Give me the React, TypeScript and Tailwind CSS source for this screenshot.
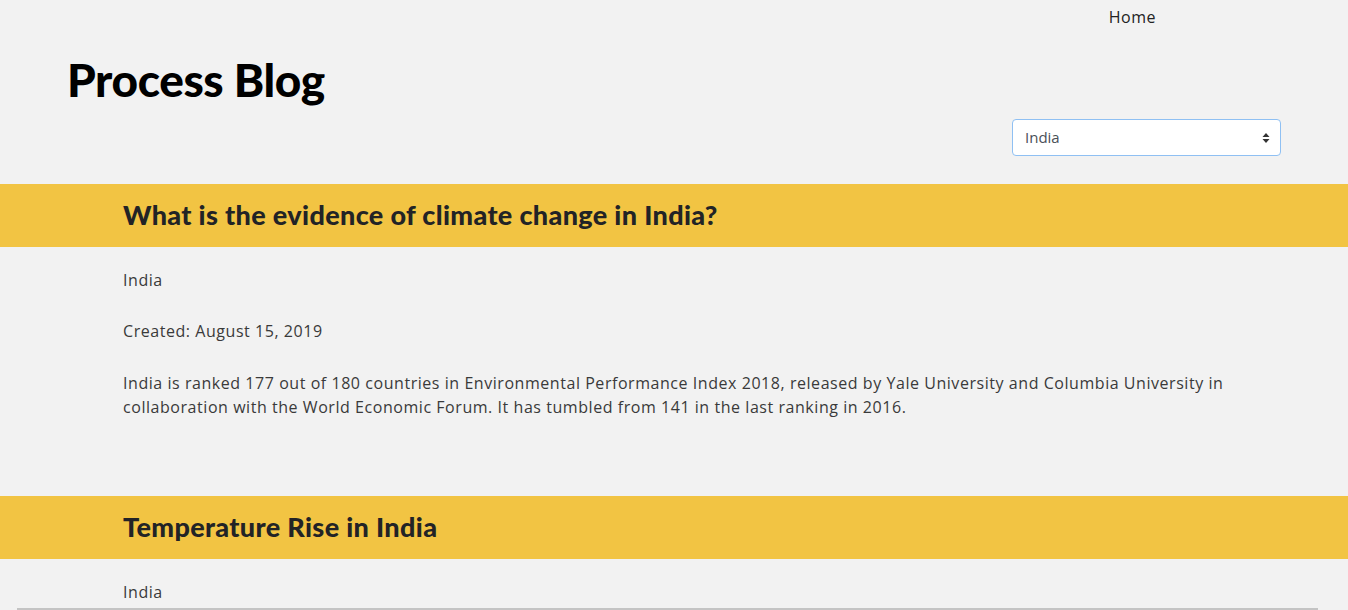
import React from "react";

const body = { fontFamily: '"Open Sans", "Noto Sans", sans-serif' };
const head = { fontFamily: '"Lato", "Open Sans", sans-serif' };

function Band({ title }: { title: string }) {
  return (
    <div className="h-[63px] bg-[#f2c443] flex items-center pl-[123px]">
      <h2 className="text-[27px] font-black text-[#222326] tracking-[0.35px]" style={head}>
        {title}
      </h2>
    </div>
  );
}

export default function App() {
  return (
    <div className="min-h-[610px] bg-[#f2f2f2] text-[#333] overflow-hidden" style={body}>
      <nav className="flex justify-end pr-[192px] pt-[5px] h-[36px]">
        <a className="text-[16px] text-[#222] tracking-[0.5px]">Home</a>
      </nav>
      <div className="flex items-start justify-between pl-[67px] pr-[67px]">
        <h1 className="text-[46px] font-black text-black leading-none pt-[21px] tracking-[-0.4px]" style={head}>
          Process Blog
        </h1>
        <div className="mt-[83px] w-[269px] h-[37px] bg-white border border-[#8fc0f3] rounded-[4px] flex items-center justify-between pl-[12px] pr-[10px]">
          <span className="text-[15px] text-[#495057]">India</span>
          <svg width="8" height="12" viewBox="0 0 8 12">
            <path d="M4 1 L7.5 5 L0.5 5 Z" fill="#333" />
            <path d="M4 11 L7.5 7 L0.5 7 Z" fill="#333" />
          </svg>
        </div>
      </div>
      <div className="mt-[28px]">
        <Band title="What is the evidence of climate change in India?" />
        <div className="pl-[123px] pr-[100px] pt-[21px] pb-[77px] text-[16px] leading-[24px] text-[#3a3a3a] tracking-[0.55px]">
          <p>India</p>
          <p className="mt-[27px]">Created: August 15, 2019</p>
          <p className="mt-[28px]">
            India is ranked 177 out of 180 countries in Environmental Performance Index 2018, released by Yale University and Columbia University in
            <br />
            collaboration with the World Economic Forum. It has tumbled from 141 in the last ranking in 2016.
          </p>
        </div>
        <Band title="Temperature Rise in India" />
        <div className="pl-[123px] pt-[21px] text-[16px] leading-[24px] text-[#3a3a3a] tracking-[0.55px]">
          <p>India</p>
        </div>
      </div>
      <div className="fixed left-[17px] bottom-0 w-[1301px] h-[2px] bg-[#c4c4c4]" />
    </div>
  );
}
